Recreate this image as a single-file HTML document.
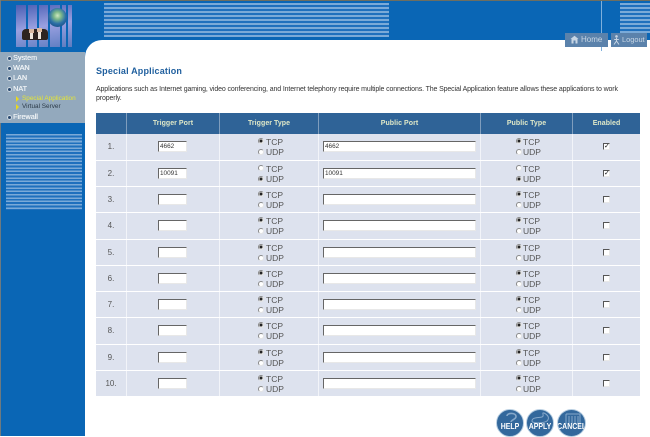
<!DOCTYPE html>
<html><head><meta charset="utf-8"><style>
html,body{margin:0;padding:0}
body{width:650px;height:436px;overflow:hidden;position:relative;background:#fff;font-family:"Liberation Sans",sans-serif;color:#333}
div,span,i,svg{position:absolute;display:block}
.stripes{background:repeating-linear-gradient(to bottom,#7aaad8 0,#7aaad8 2px,#1f70bd 2px,#1f70bd 4px)}
.nav{left:13px;color:#eef2f5;font-size:7.2px;line-height:10px;white-space:nowrap;text-shadow:.3px 0 0 #eef2f5}
.dot{left:7px;width:3px;height:3px;border-radius:50%;background:#2a4a70;border:1px solid #cdd7e0}
.row{left:96px;width:544px;background:#dde2ee}
.sep{top:0;bottom:0;width:1px;background:#f2f4f9}
.n{left:0;width:30px;text-align:center;top:8px;font-size:8px;line-height:10px;color:#555}
.in{height:9px;background:#fff;border:1px solid;border-color:#666 #e8e8e8 #e8e8e8 #666;font-size:6.4px;line-height:10px;padding-left:1px;color:#333;top:7px}
.p1{left:62px;width:26px}
.p2{left:227px;width:150px}
.t{font-size:8.5px;line-height:10px;color:#555;white-space:nowrap}
.r{width:4px;height:4px;border-radius:50%;border:1px solid #888;border-right-color:#e4e4e4;border-bottom-color:#e4e4e4;background:#fff}
.r.c{background:radial-gradient(circle,#222 0,#222 40%,#fff 70%)}
.h{top:0;height:21px;line-height:21px;text-align:center;color:#dfe8c8;font-size:7px;font-weight:bold;letter-spacing:.05px}
.cb{left:507px;top:9px;width:5px;height:5px;border:1px solid;border-color:#555 #e8e8e8 #e8e8e8 #555;background:#fff;font-size:7px;line-height:5px;color:#111;text-align:center;overflow:hidden}
.b{top:409px;width:26px;height:26px;border-radius:50%;background:#33689c;border:1px solid #b9cfe2;color:#fff;font-size:8.5px;font-weight:bold;line-height:9px;text-align:center;overflow:hidden}
.b span{left:-4px;right:-4px;top:12px;transform:scaleX(.82);white-space:nowrap}
.b svg{left:0;top:0}
.tb{top:33px;height:14px;background:#5b82ab;color:#c8d6e4;font-size:8px;line-height:14px;white-space:nowrap}
</style></head><body>
<div style="left:0;top:0;width:650px;height:40px;background:#0a66b5"></div>
<div style="left:0;top:0;width:650px;height:1px;background:#6e6e60"></div>
<div style="left:0;top:40px;width:85px;height:396px;background:#0a66b5"></div>
<div style="left:0;top:0;width:1px;height:436px;background:#6e7a80"></div>
<div style="left:85px;top:40px;width:30px;height:30px;background:#0a66b5"></div>
<div style="left:85px;top:40px;width:565px;height:396px;background:#fff;border-top-left-radius:17px"></div>
<!-- logo -->
<div style="left:16px;top:5px;width:56px;height:42px;background:linear-gradient(170deg,#4a5fb4,#9aa0e0 50%,#5c7cc0)"></div>
<div style="left:26px;top:5px;width:2px;height:42px;background:#0a66b5"></div>
<div style="left:37px;top:5px;width:2px;height:42px;background:#0a66b5"></div>
<div style="left:48px;top:5px;width:2px;height:42px;background:#0a66b5"></div>
<div style="left:60px;top:5px;width:2px;height:42px;background:#0a66b5"></div>
<div style="left:66px;top:5px;width:2px;height:42px;background:#0a66b5"></div>
<div style="left:22px;top:29px;width:26px;height:11px;background:#2e2420;border-radius:4px 4px 2px 2px"></div>
<div style="left:29px;top:29px;width:5px;height:4px;background:#d9b8a0"></div>
<div style="left:37px;top:28px;width:5px;height:4px;background:#d9b8a0"></div>
<div style="left:30px;top:33px;width:3px;height:6px;background:#efe6dc"></div>
<div style="left:38px;top:32px;width:3px;height:7px;background:#efe6dc"></div>
<div style="left:48px;top:8px;width:19px;height:19px;border-radius:50%;background:radial-gradient(circle at 50% 40%,#cfe8c0 0,#7db88a 25%,#2c6fa8 55%,#0d3a6c 100%)"></div>
<!-- stripes -->
<div class="stripes" style="left:104px;top:3px;width:285px;height:34px"></div>
<div class="stripes" style="left:620px;top:3px;width:30px;height:30px"></div>
<div class="stripes" style="left:6px;top:134px;width:76px;height:76px;background:repeating-linear-gradient(to bottom,#7aaad8 0,#7aaad8 1.6px,#1f70bd 1.6px,#1f70bd 3.33px)"></div>
<div style="left:601px;top:1px;width:1px;height:50px;background:#7fb0dc"></div>
<!-- sidebar -->
<div style="left:0;top:52px;width:85px;height:71px;background:#93a9bd"></div>
<i class="dot" style="top:56px"></i><div class="nav" style="top:53px">System</div>
<i class="dot" style="top:66px"></i><div class="nav" style="top:63px">WAN</div>
<i class="dot" style="top:76px"></i><div class="nav" style="top:73px">LAN</div>
<i class="dot" style="top:87px"></i><div class="nav" style="top:84px">NAT</div>
<i class="dot" style="top:115px"></i><div class="nav" style="top:112px">Firewall</div>
<div style="left:16px;top:96px;width:0;height:0;border-left:3px solid #e8d820;border-top:3px solid transparent;border-bottom:3px solid transparent"></div>
<div class="nav" style="left:22px;top:94px;font-size:6.4px;text-shadow:none;color:#e6e632">Special Application</div>
<div style="left:16px;top:104px;width:0;height:0;border-left:3px solid #e8d820;border-top:3px solid transparent;border-bottom:3px solid transparent"></div>
<div class="nav" style="left:22px;top:102px;font-size:6.4px;text-shadow:none;color:#2c3a48">Virtual Server</div>
<!-- top buttons -->
<div class="tb" style="left:565px;width:43px"><svg style="left:5px;top:2px" width="9" height="9" viewBox="0 0 9 9"><path d="M.5 4 4.5 .8 8.5 4V4H7.5V8.5H5.5V5.5H3.5V8.5H1.5V4Z" fill="#c8d6e4"/></svg><span style="left:16px;top:0">Home</span></div>
<div class="tb" style="left:611px;width:36px;font-size:7.4px"><svg style="left:2px;top:2px" width="7" height="10" viewBox="0 0 7 10"><circle cx="3.5" cy="1.4" r="1.3" fill="#c8d6e4"/><path d="M3.5 3V6L1 9.5M3.5 6 6 9.5M1.2 4.5H5.8" stroke="#c8d6e4" stroke-width="1" fill="none"/></svg><span style="left:11px;top:0">Logout</span></div>
<!-- heading -->
<div style="left:96px;top:65px;font-size:9px;font-weight:bold;color:#1f5f9e;line-height:13px;white-space:nowrap;letter-spacing:.18px">Special Application</div>
<div style="left:96px;top:86px;width:540px;font-size:7px;line-height:8.7px;color:#333;white-space:nowrap;letter-spacing:-.125px">Applications such as Internet gaming, video conferencing, and Internet telephony require multiple connections. The Special Application feature allows these applications to work<br>properly.</div>
<!-- table header -->
<div class="row" style="top:113px;height:21px;background:#2f6397">
<div class="sep" style="left:30px;background:#7f9dbd"></div><div class="sep" style="left:123px;background:#7f9dbd"></div><div class="sep" style="left:222px;background:#7f9dbd"></div><div class="sep" style="left:384px;background:#7f9dbd"></div><div class="sep" style="left:476px;background:#7f9dbd"></div>
<div class="h" style="left:31px;width:92px">Trigger Port</div><div class="h" style="left:124px;width:98px">Trigger Type</div><div class="h" style="left:223px;width:161px">Public Port</div><div class="h" style="left:385px;width:91px">Public Type</div><div class="h" style="left:477px;width:67px">Enabled</div>
</div>
<!-- rows -->
<div class="row" style="top:134px;height:26px"><div class="sep" style="left:30px"></div><div class="sep" style="left:123px"></div><div class="sep" style="left:222px"></div><div class="sep" style="left:384px"></div><div class="sep" style="left:476px"></div><div class="n">1.</div><div class="in p1">4662</div><i class="r c" style="left:162px;top:4px"></i><div class="t" style="left:170px;top:3px">TCP</div><i class="r" style="left:162px;top:15px"></i><div class="t" style="left:170px;top:13px">UDP</div><div class="in p2">4662</div><i class="r c" style="left:420px;top:4px"></i><div class="t" style="left:427px;top:3px">TCP</div><i class="r" style="left:420px;top:15px"></i><div class="t" style="left:427px;top:13px">UDP</div><div class="cb">✓</div></div>
<div class="row" style="top:161px;height:25px"><div class="sep" style="left:30px"></div><div class="sep" style="left:123px"></div><div class="sep" style="left:222px"></div><div class="sep" style="left:384px"></div><div class="sep" style="left:476px"></div><div class="n">2.</div><div class="in p1">10091</div><i class="r" style="left:162px;top:4px"></i><div class="t" style="left:170px;top:3px">TCP</div><i class="r c" style="left:162px;top:15px"></i><div class="t" style="left:170px;top:13px">UDP</div><div class="in p2">10091</div><i class="r" style="left:420px;top:4px"></i><div class="t" style="left:427px;top:3px">TCP</div><i class="r c" style="left:420px;top:15px"></i><div class="t" style="left:427px;top:13px">UDP</div><div class="cb">✓</div></div>
<div class="row" style="top:187px;height:25px"><div class="sep" style="left:30px"></div><div class="sep" style="left:123px"></div><div class="sep" style="left:222px"></div><div class="sep" style="left:384px"></div><div class="sep" style="left:476px"></div><div class="n">3.</div><div class="in p1"></div><i class="r c" style="left:162px;top:4px"></i><div class="t" style="left:170px;top:3px">TCP</div><i class="r" style="left:162px;top:15px"></i><div class="t" style="left:170px;top:13px">UDP</div><div class="in p2"></div><i class="r c" style="left:420px;top:4px"></i><div class="t" style="left:427px;top:3px">TCP</div><i class="r" style="left:420px;top:15px"></i><div class="t" style="left:427px;top:13px">UDP</div><div class="cb"></div></div>
<div class="row" style="top:213px;height:26px"><div class="sep" style="left:30px"></div><div class="sep" style="left:123px"></div><div class="sep" style="left:222px"></div><div class="sep" style="left:384px"></div><div class="sep" style="left:476px"></div><div class="n">4.</div><div class="in p1"></div><i class="r c" style="left:162px;top:4px"></i><div class="t" style="left:170px;top:3px">TCP</div><i class="r" style="left:162px;top:15px"></i><div class="t" style="left:170px;top:13px">UDP</div><div class="in p2"></div><i class="r c" style="left:420px;top:4px"></i><div class="t" style="left:427px;top:3px">TCP</div><i class="r" style="left:420px;top:15px"></i><div class="t" style="left:427px;top:13px">UDP</div><div class="cb"></div></div>
<div class="row" style="top:240px;height:25px"><div class="sep" style="left:30px"></div><div class="sep" style="left:123px"></div><div class="sep" style="left:222px"></div><div class="sep" style="left:384px"></div><div class="sep" style="left:476px"></div><div class="n">5.</div><div class="in p1"></div><i class="r c" style="left:162px;top:4px"></i><div class="t" style="left:170px;top:3px">TCP</div><i class="r" style="left:162px;top:15px"></i><div class="t" style="left:170px;top:13px">UDP</div><div class="in p2"></div><i class="r c" style="left:420px;top:4px"></i><div class="t" style="left:427px;top:3px">TCP</div><i class="r" style="left:420px;top:15px"></i><div class="t" style="left:427px;top:13px">UDP</div><div class="cb"></div></div>
<div class="row" style="top:266px;height:25px"><div class="sep" style="left:30px"></div><div class="sep" style="left:123px"></div><div class="sep" style="left:222px"></div><div class="sep" style="left:384px"></div><div class="sep" style="left:476px"></div><div class="n">6.</div><div class="in p1"></div><i class="r c" style="left:162px;top:4px"></i><div class="t" style="left:170px;top:3px">TCP</div><i class="r" style="left:162px;top:15px"></i><div class="t" style="left:170px;top:13px">UDP</div><div class="in p2"></div><i class="r c" style="left:420px;top:4px"></i><div class="t" style="left:427px;top:3px">TCP</div><i class="r" style="left:420px;top:15px"></i><div class="t" style="left:427px;top:13px">UDP</div><div class="cb"></div></div>
<div class="row" style="top:292px;height:25px"><div class="sep" style="left:30px"></div><div class="sep" style="left:123px"></div><div class="sep" style="left:222px"></div><div class="sep" style="left:384px"></div><div class="sep" style="left:476px"></div><div class="n">7.</div><div class="in p1"></div><i class="r c" style="left:162px;top:4px"></i><div class="t" style="left:170px;top:3px">TCP</div><i class="r" style="left:162px;top:15px"></i><div class="t" style="left:170px;top:13px">UDP</div><div class="in p2"></div><i class="r c" style="left:420px;top:4px"></i><div class="t" style="left:427px;top:3px">TCP</div><i class="r" style="left:420px;top:15px"></i><div class="t" style="left:427px;top:13px">UDP</div><div class="cb"></div></div>
<div class="row" style="top:318px;height:26px"><div class="sep" style="left:30px"></div><div class="sep" style="left:123px"></div><div class="sep" style="left:222px"></div><div class="sep" style="left:384px"></div><div class="sep" style="left:476px"></div><div class="n">8.</div><div class="in p1"></div><i class="r c" style="left:162px;top:4px"></i><div class="t" style="left:170px;top:3px">TCP</div><i class="r" style="left:162px;top:15px"></i><div class="t" style="left:170px;top:13px">UDP</div><div class="in p2"></div><i class="r c" style="left:420px;top:4px"></i><div class="t" style="left:427px;top:3px">TCP</div><i class="r" style="left:420px;top:15px"></i><div class="t" style="left:427px;top:13px">UDP</div><div class="cb"></div></div>
<div class="row" style="top:345px;height:25px"><div class="sep" style="left:30px"></div><div class="sep" style="left:123px"></div><div class="sep" style="left:222px"></div><div class="sep" style="left:384px"></div><div class="sep" style="left:476px"></div><div class="n">9.</div><div class="in p1"></div><i class="r c" style="left:162px;top:4px"></i><div class="t" style="left:170px;top:3px">TCP</div><i class="r" style="left:162px;top:15px"></i><div class="t" style="left:170px;top:13px">UDP</div><div class="in p2"></div><i class="r c" style="left:420px;top:4px"></i><div class="t" style="left:427px;top:3px">TCP</div><i class="r" style="left:420px;top:15px"></i><div class="t" style="left:427px;top:13px">UDP</div><div class="cb"></div></div>
<div class="row" style="top:371px;height:25px"><div class="sep" style="left:30px"></div><div class="sep" style="left:123px"></div><div class="sep" style="left:222px"></div><div class="sep" style="left:384px"></div><div class="sep" style="left:476px"></div><div class="n">10.</div><div class="in p1"></div><i class="r c" style="left:162px;top:4px"></i><div class="t" style="left:170px;top:3px">TCP</div><i class="r" style="left:162px;top:15px"></i><div class="t" style="left:170px;top:13px">UDP</div><div class="in p2"></div><i class="r c" style="left:420px;top:4px"></i><div class="t" style="left:427px;top:3px">TCP</div><i class="r" style="left:420px;top:15px"></i><div class="t" style="left:427px;top:13px">UDP</div><div class="cb"></div></div>
<!-- action buttons -->
<div class="b" style="left:496px"><svg width="26" height="26" viewBox="0 0 26 26"><path d="M10 6C10 2.5 19 2.5 19 6.5C19 9.5 14.5 9.5 14 12" fill="none" stroke="#86a8ca" stroke-width="1.6"/></svg><span>HELP</span></div>
<div class="b" style="left:526px"><svg width="26" height="26" viewBox="0 0 26 26"><path d="M5 11C5 7 12 8 15 7C18 6 14 2 17 3C21 5 23 8 20 11C17 13 5 14 5 11Z" fill="none" stroke="#86a8ca" stroke-width="1"/></svg><span>APPLY</span></div>
<div class="b" style="left:557px;width:27px"><svg width="27" height="26" viewBox="0 0 27 26"><path d="M8 4H22V18M8 4V14M11 6V14M14 6V14M17 6V14M20 6V14" fill="none" stroke="#86a8ca" stroke-width="1"/></svg><span>CANCEL</span></div>
</body></html>
